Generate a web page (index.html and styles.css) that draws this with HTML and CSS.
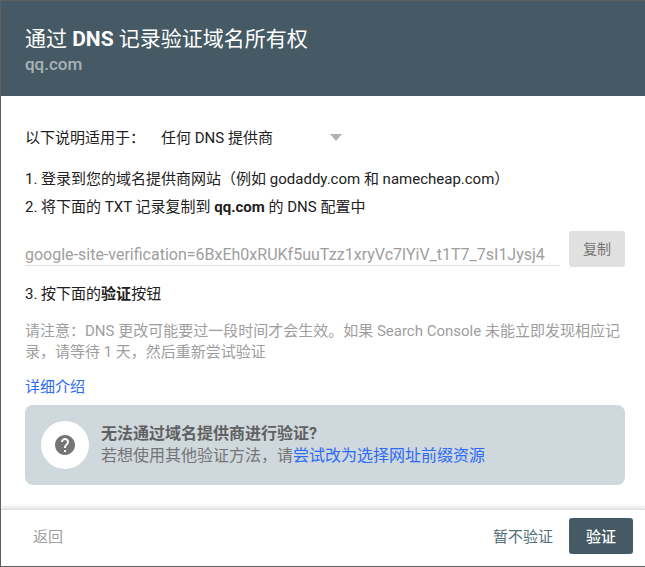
FILE: index.html
```html
<!DOCTYPE html>
<html lang="zh-CN">
<head>
<meta charset="utf-8">
<title>通过 DNS 记录验证域名所有权</title>
<link rel="stylesheet" href="styles.css">
</head>
<body>
<div class="dialog">
  <header class="head">
    <h1 class="title">通过 <b>DNS</b> 记录验证域名所有权</h1>
    <div class="domain">qq.com</div>
  </header>
  <main class="body">
    <div class="provider">
      <span class="provider-label">以下说明适用于：</span>
      <span class="provider-select"><span>任何 DNS 提供商</span><i class="caret"></i></span>
    </div>
    <p class="step step-1">1. 登录到您的域名提供商网站（例如 godaddy.com 和 namecheap.com）</p>
    <p class="step step-2">2. 将下面的 TXT 记录复制到 <b>qq.com</b> 的 DNS 配置中</p>
    <div class="record">
      <div class="record-value">google-site-verification=6BxEh0xRUKf5uuTzz1xryVc7lYiV_t1T7_7sI1Jysj4</div>
      <button class="copy">复制</button>
    </div>
    <p class="step step-3">3. 按下面的<b>验证</b>按钮</p>
    <p class="note">请注意：DNS 更改可能要过一段时间才会生效。如果 Search Console 未能立即发现相应记录，请等待 1 天，然后重新尝试验证</p>
    <a class="more">详细介绍</a>
    <div class="help">
      <span class="help-icon">
        <svg width="24" height="24" viewBox="0 0 24 24"><path fill="#757575" d="M12 2C6.48 2 2 6.48 2 12s4.48 10 10 10 10-4.48 10-10S17.52 2 12 2zm1 17h-2v-2h2v2zm2.07-7.75l-.9.92C13.45 12.9 13 13.5 13 15h-2v-.5c0-1.1.45-2.1 1.17-2.83l1.24-1.26c.37-.36.59-.86.59-1.41 0-1.1-.9-2-2-2s-2 .9-2 2H8c0-2.21 1.79-4 4-4s4 1.79 4 4c0 .88-.36 1.68-.93 2.25z"/></svg>
      </span>
      <div class="help-text">
        <div class="help-title">无法通过域名提供商进行验证?</div>
        <div class="help-sub">若想使用其他验证方法，请<a class="link">尝试改为选择网址前缀资源</a></div>
      </div>
    </div>
  </main>
  <footer class="foot">
    <button class="btn btn-back">返回</button>
    <div class="foot-right">
      <button class="btn btn-skip">暂不验证</button>
      <button class="btn btn-verify">验证</button>
    </div>
  </footer>
</div>
</body>
</html>
```
FILE: styles.css
```css
* { box-sizing: border-box; }
html, body { margin: 0; height: 100%; }
body {
  background: #5f5f5f;
  padding: 1px 0 1px 1px;
  overflow: hidden;
  font-family: Roboto, "Noto Sans CJK SC", sans-serif;
  font-size: 15px;
  color: #212121;
}
.dialog {
  height: 565px;
  background: #fff;
  display: flex;
  flex-direction: column;
  overflow: hidden;
}
.head {
  height: 95px;
  flex: none;
  background: #455a64;
  padding: 24px 24px 0;
  color: #fff;
}
.title { margin: 0; font-size: 21px; line-height: 28px; font-weight: 400; }
.title b { font-weight: 700; }
.domain { font-size: 17px; line-height: 23px; font-weight: 500; color: rgba(255,255,255,.55); }
.body { flex: 1; padding: 0 20px 0 24px; }
.provider { display: flex; align-items: center; height: 24px; margin-top: 28px; }
.provider-label { width: 136px; }
.provider-select { display: flex; align-items: center; width: 181px; justify-content: space-between; }
.caret { width: 0; height: 0; border: 6px solid transparent; border-top: 7px solid #b0b0b0; border-bottom: 0; margin-top: 2px; }
.step { margin: 0; line-height: 20px; }
.step-1 { margin-top: 21px; }
.step-2 { margin-top: 8px; }
.step b { font-weight: 700; }
.record { display: flex; align-items: flex-start; margin-top: 14px; }
.record-value {
  width: 535px; margin-top: 10px; height: 25px; line-height: 27px;
  font-size: 16px; color: #9e9e9e; border-bottom: 1px solid #e0e0e0;
  white-space: nowrap; overflow: hidden;
}
.copy {
  margin-left: 9px; width: 56px; height: 36px; border: 0; border-radius: 3px; padding: 0 0 3px;
  background: #e0e0e0; color: #757575; font: inherit; font-size: 14px;
}
.step-3 { margin-top: 17px; }
.note { margin: 17px 0 0; line-height: 21px; color: #9e9e9e; width: 600px; }
.more { display: block; margin-top: 14px; line-height: 20px; color: #2d6bf5; }
.help {
  margin-top: 8px; height: 80px; background: #cfd8dc; border-radius: 8px;
  display: flex; align-items: center; padding-left: 16px; width: 600px;
}
.help-icon {
  width: 48px; height: 48px; border-radius: 50%; background: #fff;
  display: flex; align-items: center; justify-content: center; flex: none;
}
.help-text { margin-left: 12px; font-size: 16px; line-height: 22px; color: #757575; }
.help-title { font-weight: 700; color: #616161; }
.link { color: #2d6bf5; }
.foot {
  height: 57px; flex: none; display: flex; align-items: center; justify-content: space-between;
  padding: 0 12px 5px 20px; box-shadow: 0 -2px 4px rgba(0,0,0,.12); border-top: 1px solid #e0e0e0;
}
.foot-right { display: flex; align-items: center; gap: 8px; }
.btn { border: 0; background: none; font: inherit; height: 36px; padding: 0 12px; border-radius: 3px; }
.btn-back { color: #9e9e9e; }
.btn-skip { color: #546e7a; padding: 0 8px; }
.btn-verify { background: #455a64; color: #fff; width: 64px; font-weight: 500; }
```
